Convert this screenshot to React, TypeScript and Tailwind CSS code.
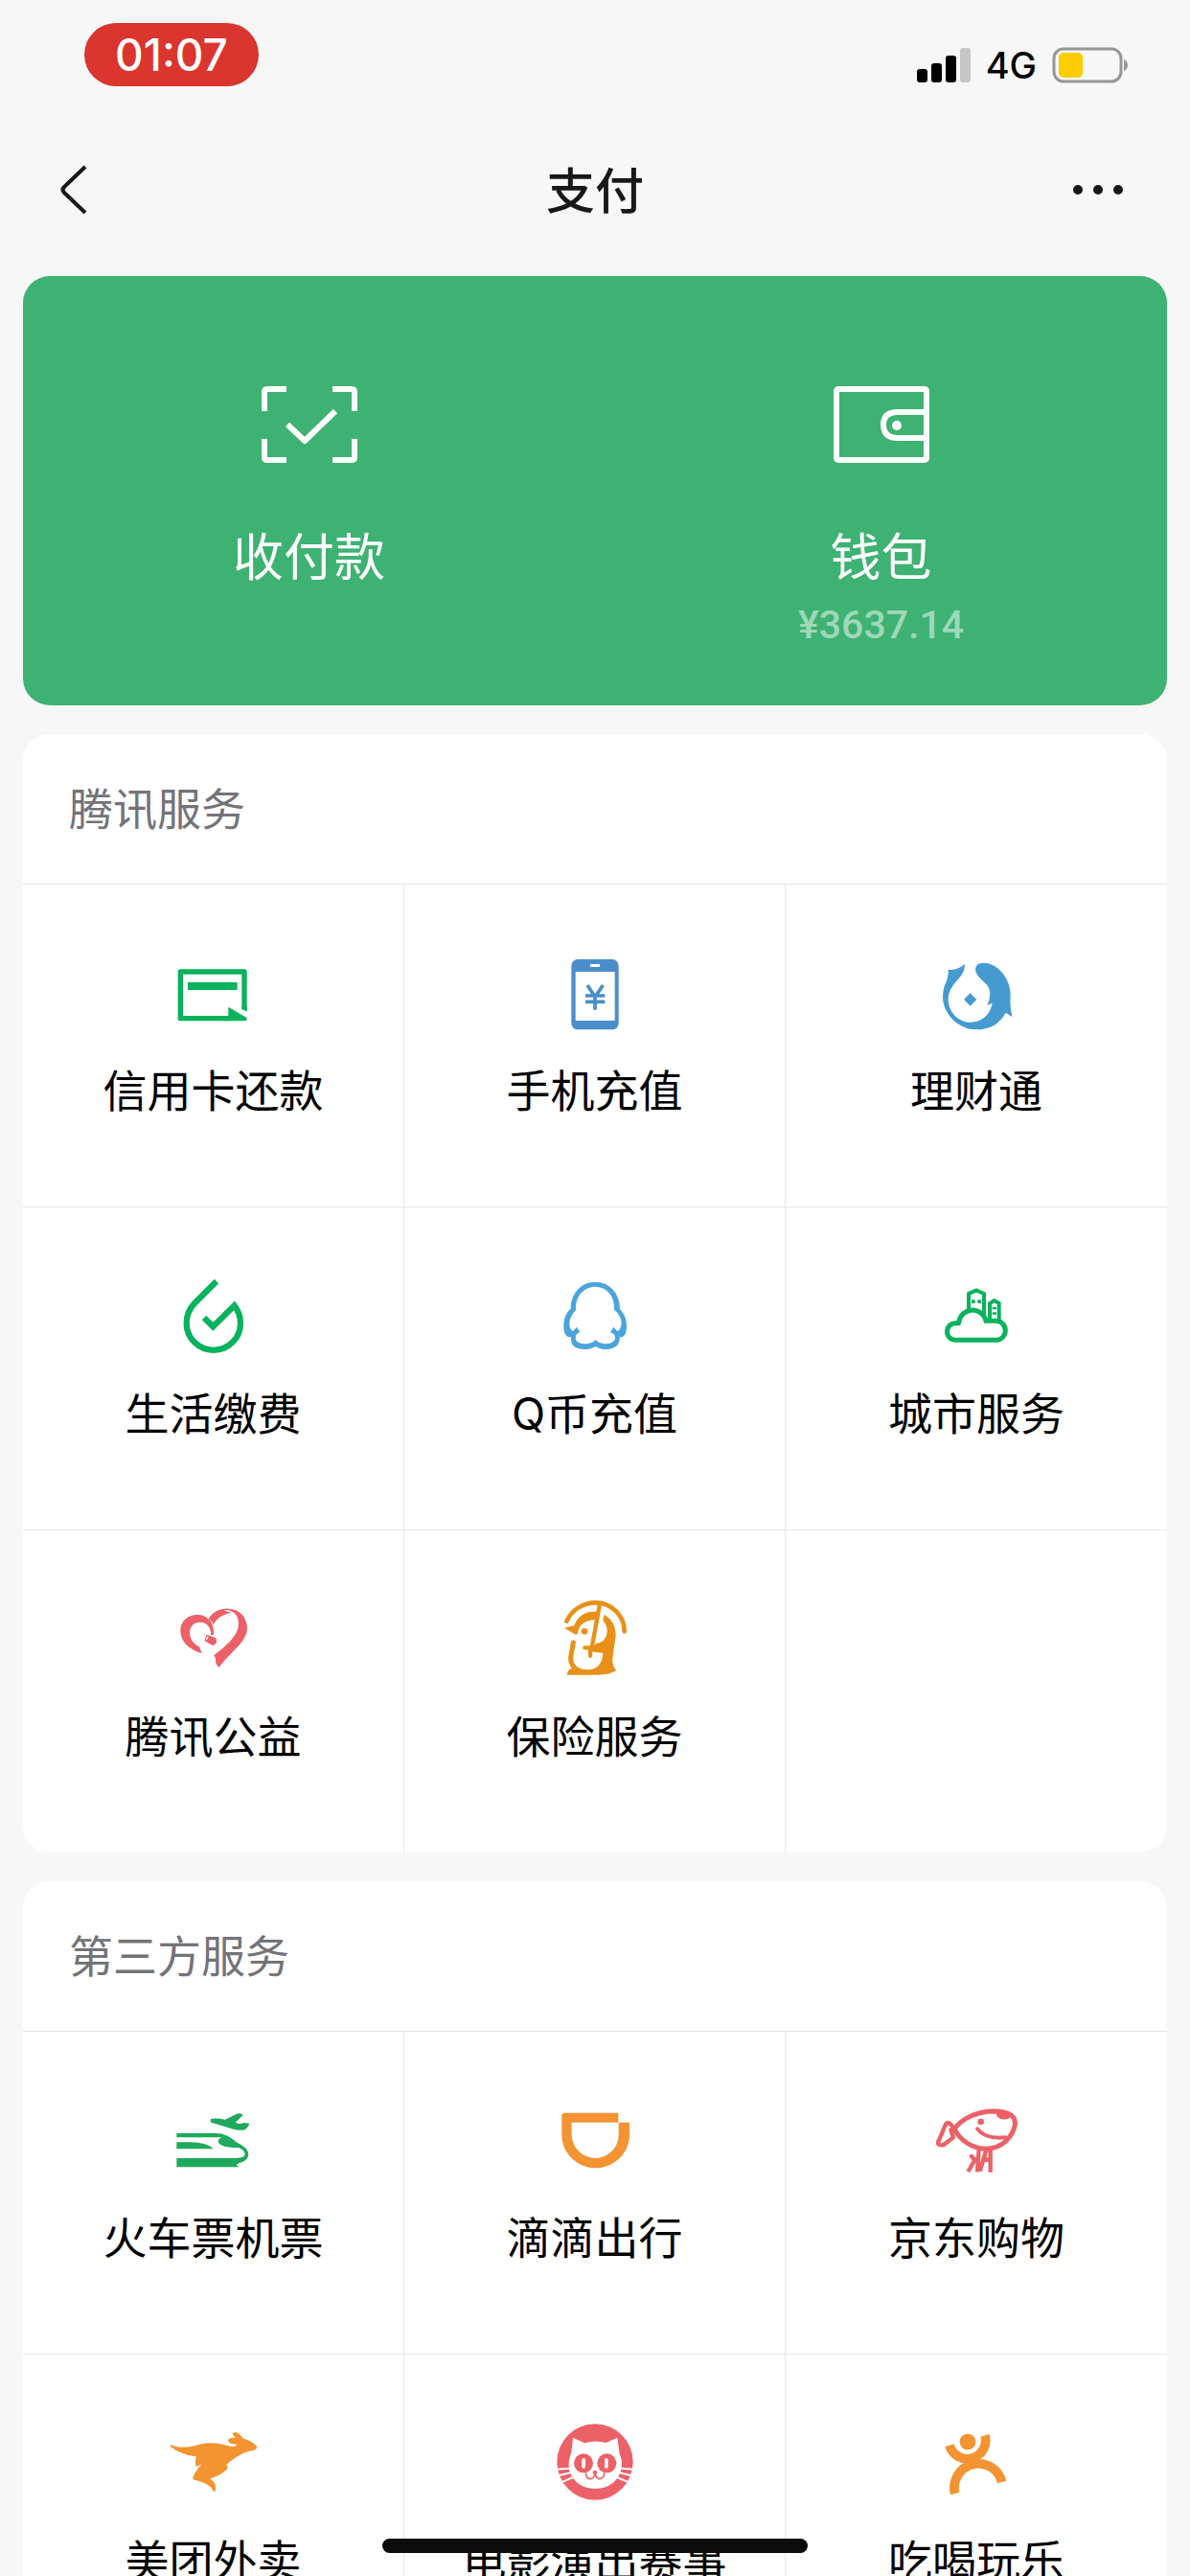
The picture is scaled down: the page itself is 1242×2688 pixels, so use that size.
import React from 'react';

type Service = {
  label: string;
  icon: React.ReactNode;
};

const GREEN = '#09b25d';
const RED = '#ec6167';
const ORANGE = '#f39331';

const Icon = ({ viewBox, children }: { viewBox: string; children: React.ReactNode }) => (
  <svg className="size-24" viewBox={viewBox} fill="none" aria-hidden="true">
    {children}
  </svg>
);

const CardIcon = () => (
  <Icon viewBox="525 750 288 288">
    <path d="M720 968H565V822H765V941" stroke={GREEN} strokeWidth="16" strokeLinejoin="round" />
    <path d="M757 930V936L773 947V930Z" fill={GREEN} />
    <path d="M715 932L773 967Q774 976 767 976H700V960H715Z" fill={GREEN} />
    <path d="M588 855H743V879H588Z" fill={GREEN} />
  </Icon>
);

const PhoneIcon = () => (
  <Icon viewBox="39 60 288 288">
    <rect x="109" y="93" width="148" height="220" rx="20" fill="#4a8dcb" />
    <rect x="122" y="132" width="123" height="153" fill="#fff" />
    <rect x="168" y="108" width="30" height="9" fill="#fff" />
    <path d="M159 174L181 207M208 174L186 207M153 207H214M153 226H214M183 203V251" stroke="#4a8dcb" strokeWidth="11" />
  </Icon>
);

const WealthIcon = () => (
  <Icon viewBox="1233 60 288 288">
    <path
      d="M1289 125Q1315 130 1340 108Q1344 130 1322 153Q1289 188 1289 215C1289 258 1320 290 1358 290C1392 290 1420 268 1427 230L1411 237Q1419 222 1420 200Q1419 180 1405 168C1385 150 1374 138 1374 122Q1376 104 1400 104C1445 104 1484 155 1484 205Q1481 240 1489 273L1469 260Q1440 313 1378 313C1320 313 1272 262 1272 212Q1272 185 1283 163Q1290 145 1289 125Z"
      fill="#459bd0"
    />
    <path d="M1358 199L1378 219L1358 239L1338 219Z" fill="#459bd0" />
  </Icon>
);

const DropIcon = () => (
  <Icon viewBox="45 51 288 288">
    <path
      d="M198 81L129 150C112 168 104 190 104 212A84 84 0 0 0 273 212C273 192 266 173 254 157L187 223L159 195"
      stroke={GREEN}
      strokeWidth="19"
    />
  </Icon>
);

const PenguinIcon = () => (
  <Icon viewBox="1239 51 288 288">
    <path
      fillRule="evenodd"
      d="M1307 168C1307 118 1340 83 1384 83C1428 83 1461 118 1461 168C1476 185 1482 200 1482 222C1482 245 1476 256 1460 256C1462 280 1445 294 1418 294Q1400 294 1385 284Q1370 294 1350 294C1322 294 1306 283 1308 256C1292 256 1285 245 1285 222C1285 200 1291 180 1307 168ZM1323 170C1321 125 1350 98 1384 98C1418 98 1446 125 1443 170C1457 182 1466 195 1466 215Q1462 234 1453 237L1441 224L1431 241L1442 246Q1447 252 1446 262Q1440 277 1415 277Q1395 275 1385 264Q1375 275 1355 277Q1325 277 1322 262Q1321 252 1326 245L1336 241L1326 224L1314 237Q1303 234 1303 210Q1305 190 1323 170Z"
      fill="#4aa5dd"
    />
  </Icon>
);

const CityIcon = () => (
  <Icon viewBox="93 51 288 288">
    <g stroke={GREEN}>
      <path
        d="M187 212H172A26 26 0 0 0 172 265H298A29 29 0 0 0 298 205H267A43 43 0 0 0 182 214"
        strokeWidth="15"
      />
      <path d="M213 175V120L237 109L261 120V195M279 200V150L293 141L308 150V203" strokeWidth="12" />
    </g>
    <path d="M222 139h11v11h-11ZM241 139h11v11h-11ZM287 162h13v7h-13ZM287 178h13v7h-13Z" fill={GREEN} />
  </Icon>
);

const HeartIcon = () => (
  <Icon viewBox="45 72 288 288">
    <g fill={RED}>
      <path d="M152 256C110 243 85 218 85 184C85 155 108 135 138 135C170 135 192 158 189 198H180C182 172 165 158 146 158C126 158 114 172 114 192C114 212 130 230 144 235Z" />
      <path d="M167 197L193 206Q199 210 198 220Q194 232 184 230L160 216Z" />
      <path d="M173 148C185 128 205 114 238 117L222 122L244 128C215 135 200 145 188 166Q183 153 173 148Z" />
      <path d="M224 117C262 112 294 135 294 180C290 225 235 255 206 300L196 288Q197 270 190 262C230 230 267 200 267 162Q267 140 250 127Q240 121 224 117Z" />
    </g>
    <path d="M171 203L166 214" stroke="#fff" strokeWidth="4" />
  </Icon>
);

const InsuranceIcon = () => (
  <Icon viewBox="1239 72 288 288">
    <g stroke="#e89018" strokeLinecap="round">
      <path d="M1294 155C1310 120 1345 97 1385 97C1435 97 1475 138 1475 187" strokeWidth="14" />
      <path d="M1397 106L1374 232M1351 238H1400M1368 240V263" strokeWidth="13" />
      <path d="M1315 222L1307 268Q1306 284 1316 298" strokeWidth="15" />
    </g>
    <g fill="#e89018">
      <path d="M1390 126C1350 120 1326 145 1318 169L1287 176L1324 198L1329 192Q1332 155 1384 150Z" />
      <circle cx="1350" cy="187" r="10" />
      <path d="M1295 323Q1297 307 1310 303L1318 290Q1335 308 1362 307Q1405 305 1408 255L1370 250L1384 226Q1417 222 1421 190Q1423 170 1408 153L1411 134Q1448 155 1448 200L1438 270Q1436 295 1449 309Q1430 323 1390 323Z" />
    </g>
  </Icon>
);

const TrainIcon = () => (
  <Icon viewBox="45 24 288 288">
    <g fill="#1fa95d">
      <path d="M180 97Q190 91 225 98L262 80Q275 76 281 84L257 107Q270 115 284 108L300 110Q302 118 287 130Q278 134 250 128L186 109Q175 106 180 97Z" />
      <path d="M73 141H195Q232 141 262 170Q297 185 298 208Q296 228 268 235L260 240L268 247H73V219H260Q287 217 287 206Q284 192 267 186Q205 187 203 165Q206 155 218 154H73Z" />
      <path d="M73 169H115Q170 170 189 190H73Z" />
    </g>
  </Icon>
);

const RideIcon = () => (
  <Icon viewBox="1239 24 288 288">
    <path
      d="M1456 77H1287Q1279 77 1279 85V147C1279 205 1330 250 1385 250C1440 250 1491 205 1491 147V107H1457V147C1456 190 1420 219 1384 219C1345 219 1310 185 1310 147V107H1456Z"
      fill={ORANGE}
    />
  </Icon>
);

const DogIcon = () => (
  <Icon viewBox="93 54 288 288">
    <g stroke={RED} strokeLinecap="round" strokeLinejoin="round">
      <path d="M168 158C195 120 245 103 290 102C335 102 362 115 358 145C352 175 325 220 265 220C220 218 185 190 168 158Z" strokeWidth="15" />
      <path d="M163 150L152 139Q142 137 138 150L117 200Q116 210 135 207L165 184L157 160" strokeWidth="13" />
      <path d="M240 157Q265 190 328 184" strokeWidth="12" />
    </g>
    <path d="M245 222L240 292M220 238Q224 254 244 254M235 250L211 291M268 224L248 290M258 258Q270 250 282 256M281 222V293" stroke={RED} strokeWidth="13" />
    <path d="M298 106Q350 103 350 115Q340 130 315 127Q300 122 298 106Z" fill={RED} />
    <circle cx="251" cy="135" r="10" fill={RED} />
  </Icon>
);

const KangarooIcon = () => (
  <Icon viewBox="45 45 288 288">
    <path
      d="M54 126C85 140 120 132 145 125C190 115 215 125 245 132Q258 132 263 125Q235 125 234 112Q238 102 257 105L248 92Q252 84 262 88Q275 95 280 106Q310 115 324 131Q325 142 312 144Q275 148 229 188Q237 200 225 208Q205 225 177 232Q200 245 194 272H190Q175 245 124 235Q122 220 150 188L134 195Q130 180 134 163Q90 160 54 132Z"
      fill={ORANGE}
    />
  </Icon>
);

const CatIcon = () => (
  <Icon viewBox="99 45 288 288">
    <circle cx="243" cy="180" r="119" fill={RED} />
    <path d="M174 104L211 121Q243 110 277 120L313 104L320 155Q330 175 326 200Q310 262 243 264Q180 262 162 205Q158 175 169 150Z" fill="#fff" />
    <path d="M122 203L162 200M130 222L166 214M142 242L174 228M364 203L324 200M356 222L320 214M344 242L312 228" stroke="#fff" strokeWidth="6" />
    <g fill={RED}>
      <circle cx="207" cy="184" r="30" />
      <circle cx="280" cy="184" r="30" />
      <circle cx="243" cy="213" r="7" />
    </g>
    <path d="M214 214Q216 233 230 233Q241 232 243 216Q246 232 257 233Q272 232 272 214" stroke={RED} strokeWidth="5" />
    <rect x="202" y="168" width="11" height="32" rx="5" fill="#fff" />
    <rect x="273" y="168" width="11" height="32" rx="5" fill="#fff" />
  </Icon>
);

const FunIcon = () => (
  <Icon viewBox="213 45 288 288">
    <circle cx="330" cy="117" r="25" fill={ORANGE} />
    <path d="M273 128A57 57 0 0 0 384 97M290 279A75 75 0 0 1 437 243" stroke={ORANGE} strokeWidth="29" />
  </Icon>
);

const tencentServices: Service[] = [
  { label: '信用卡还款', icon: <CardIcon /> },
  { label: '手机充值', icon: <PhoneIcon /> },
  { label: '理财通', icon: <WealthIcon /> },
  { label: '生活缴费', icon: <DropIcon /> },
  { label: 'Q币充值', icon: <PenguinIcon /> },
  { label: '城市服务', icon: <CityIcon /> },
  { label: '腾讯公益', icon: <HeartIcon /> },
  { label: '保险服务', icon: <InsuranceIcon /> },
];

const partnerServices: Service[] = [
  { label: '火车票机票', icon: <TrainIcon /> },
  { label: '滴滴出行', icon: <RideIcon /> },
  { label: '京东购物', icon: <DogIcon /> },
  { label: '美团外卖', icon: <KangarooIcon /> },
  { label: '电影演出赛事', icon: <CatIcon /> },
  { label: '吃喝玩乐', icon: <FunIcon /> },
];

const StatusBar = () => (
  <div className="flex items-start justify-between pt-6 pb-[42px] pl-[88px] pr-16">
    <div className="flex h-[66px] w-[182px] items-center justify-center rounded-full bg-[#da352e] text-[46px] leading-none font-medium text-white">
      01:07
    </div>
    <div className="mt-[25px] flex h-[38px] items-center">
      <svg className="h-9 w-14" viewBox="0 0 56 36" aria-hidden="true">
        <rect x="0" y="22" width="11" height="14" rx="3" />
        <rect x="15" y="16" width="11" height="20" rx="3" />
        <rect x="30" y="8" width="11" height="28" rx="3" />
        <rect x="45" y="0" width="11" height="36" rx="3" fill="#c6c6c6" />
      </svg>
      <span className="ml-4 text-[38px] leading-none font-medium text-black">4G</span>
      <svg className="ml-4 h-[38px] w-20" viewBox="0 0 80 38" fill="none" aria-hidden="true">
        <rect x="2" y="2" width="70" height="34" rx="10" stroke="#979797" strokeWidth="3" />
        <rect x="7" y="6" width="25" height="26" rx="5" fill="#ffcc00" />
        <path d="M75 13Q79 15 79 19Q79 23 75 25Z" fill="#979797" />
      </svg>
    </div>
  </div>
);

const NavBar = () => (
  <header className="grid h-[132px] grid-cols-3 items-center px-[60px] text-[#181818]">
    <button type="button" aria-label="返回" className="justify-self-start">
      <svg className="h-[52px] w-8" viewBox="0 0 32 52" fill="none" aria-hidden="true">
        <path d="M29 2L7 23Q4 26 7 29L29 50" stroke="currentColor" strokeWidth="4" />
      </svg>
    </button>
    <h1 className="justify-self-center pt-1 text-[51px] leading-[64px] font-medium">支付</h1>
    <button type="button" aria-label="更多" className="justify-self-end">
      <svg className="h-3 w-16" viewBox="0 0 64 12" fill="currentColor" aria-hidden="true">
        <circle cx="7" cy="6" r="5" />
        <circle cx="28" cy="6" r="5" />
        <circle cx="49" cy="6" r="5" />
      </svg>
    </button>
  </header>
);

const PayCard = () => (
  <section className="grid grid-cols-2 items-start rounded-[28px] bg-[#3eb272] pt-[114px] pb-[60px] text-white">
    <button type="button" className="flex flex-col items-center">
      <svg className="h-[82px] w-[102px]" viewBox="0 0 102 82" fill="none" stroke="#fff" strokeWidth="6" aria-hidden="true">
        <path d="M27 4H7Q4 4 4 7V27M75 4H95Q98 4 98 7V27M27 78H7Q4 78 4 75V56M75 78H95Q98 78 98 75V56" />
        <path d="M28 41L46 58L78 27" strokeLinejoin="round" />
      </svg>
      <span className="mt-[66px] text-[53px] leading-[64px]">收付款</span>
    </button>
    <button type="button" className="flex flex-col items-center">
      <svg className="h-[82px] w-[102px]" viewBox="0 0 102 82" fill="none" stroke="#fff" strokeWidth="6" aria-hidden="true">
        <rect x="4" y="4" width="94" height="74" rx="2" />
        <path d="M98 28H68Q53 28 53 41Q53 55 68 55H98" />
        <circle cx="67" cy="42" r="5" fill="#fff" stroke="none" />
      </svg>
      <span className="mt-[66px] text-[53px] leading-[64px]">钱包</span>
      <span className="mt-[14px] font-[Roboto,sans-serif] text-[41px] leading-[48px] font-medium text-white/50">¥3637.14</span>
    </button>
  </section>
);

const ServiceSection = ({ title, services }: { title: string; services: Service[] }) => {
  // pad the last row so its dividers are still drawn
  const blanks = (3 - (services.length % 3)) % 3;

  return (
    <section className="overflow-hidden rounded-[28px] bg-white">
      <h2 className="border-b border-[#e2e2e2] px-12 py-12 text-[46px] leading-[60px] text-[#737378]">{title}</h2>
      <div className="-mb-px grid grid-cols-3">
        {services.map((service) => (
          <button
            key={service.label}
            type="button"
            className="flex flex-col items-center gap-[22px] border-r border-b border-[#e8e8e8] pt-[67px] pb-[91px] text-[46px] leading-[60px] whitespace-nowrap text-black nth-[3n]:border-r-0"
          >
            {service.icon}
            <span>{service.label}</span>
          </button>
        ))}
        {Array.from({ length: blanks }, (_, i) => (
          <div key={i} className="border-b border-[#e8e8e8]" />
        ))}
      </div>
    </section>
  );
};

export default function App() {
  return (
    <div className="h-screen overflow-hidden bg-[#f7f7f7] font-[Inter,'Noto_Sans_CJK_SC',sans-serif]" lang="zh-CN">
      <StatusBar />
      <NavBar />
      <main className="flex flex-col gap-[30px] px-6 pt-6">
        <PayCard />
        <ServiceSection title="腾讯服务" services={tencentServices} />
        <ServiceSection title="第三方服务" services={partnerServices} />
      </main>
      {/* Home indicator */}
      <div className="fixed bottom-6 left-1/2 h-[15px] w-[444px] -translate-x-1/2 rounded-full bg-[#0c0c0c]" />
    </div>
  );
}
